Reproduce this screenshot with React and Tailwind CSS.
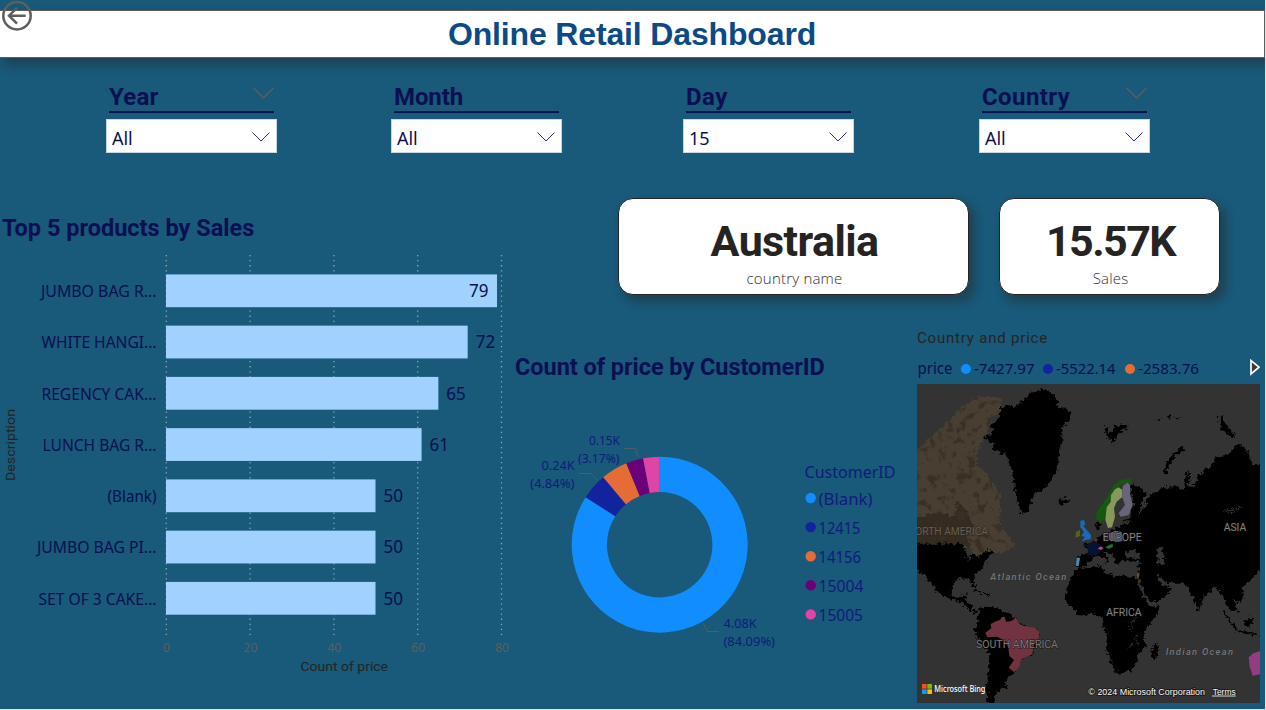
import React from "react";

const slicers = [
  { title: "Year", value: "All", header: true, gap: "ml-[106px]", track: "tracking-[0.2px]" },
  { title: "Month", value: "All", header: false, gap: "ml-[114px]", track: "tracking-[-0.1px]" },
  { title: "Day", value: "15", header: false, gap: "ml-[121px]", track: "tracking-[0.5px]" },
  { title: "Country", value: "All", header: true, gap: "ml-[125px]", track: "tracking-[0.4px]" },
];

const bars = [
  { name: "JUMBO BAG R...", value: 79, left: 41 },
  { name: "WHITE HANGI...", value: 72, left: 41.5 },
  { name: "REGENCY CAK...", value: 65, left: 41.5 },
  { name: "LUNCH BAG R...", value: 61, left: 42.5 },
  { name: "(Blank)", value: 50, left: 107.5 },
  { name: "JUMBO BAG PI...", value: 50, left: 37 },
  { name: "SET OF 3 CAKE...", value: 50, left: 38.5 },
];

const slices = [
  { id: "(Blank)", color: "#118dff", from: 0, to: 302.7, width: 54 },
  { id: "12415", color: "#12239e", from: 302.7, to: 320.1, width: 42 },
  { id: "14156", color: "#e66c37", from: 320.1, to: 337.7, width: 42.5 },
  { id: "15004", color: "#6b007b", from: 337.7, to: 349.1, width: 45 },
  { id: "15005", color: "#e044a7", from: 349.1, to: 360, width: 44.5 },
];

const SEGOE = "font-['Noto_Sans',sans-serif]";
const DIN = "font-['Roboto',sans-serif]";

function Fit({ x, y, w, size, fill, children, className = SEGOE, ...rest }) {
  return (
    <text x={x} y={y} textLength={w} lengthAdjust="spacingAndGlyphs" fontSize={size} fill={fill} className={className} {...rest}>
      {children}
    </text>
  );
}

function ring(from, to, cx, cy, r, q) {
  const p = (a, rad) => {
    const t = ((a - 90) * Math.PI) / 180;
    return `${cx + rad * Math.cos(t)} ${cy + rad * Math.sin(t)}`;
  };
  const big = to - from > 180 ? 1 : 0;
  return `M${p(from, r)}A${r} ${r} 0 ${big} 1 ${p(to, r)}L${p(to, q)}A${q} ${q} 0 ${big} 0 ${p(from, q)}Z`;
}

function Slicer({ title, value, header, gap, track }) {
  return (
    <div className={`w-[171px] ${gap}`}>
      <div className="ml-[3px] flex h-[31px] w-[165px] items-start justify-between border-b-2 border-[#0b1157]">
        <span className={`${DIN} ${track} text-[24px] leading-[30px] font-bold text-[#0a1051]`}>{title}</span>
        {header && (
          <svg width="21" height="12" viewBox="0 0 21 12" className="mt-[5px]" fill="none" stroke="#605e5c" strokeWidth="1.3">
            <path d="M0.5 1L10.5 11L20.5 1" />
          </svg>
        )}
      </div>
      <div className="mt-[6px] flex h-[34px] items-center justify-between border border-[#c9d8e0] bg-white pr-[6px] pl-[5px]">
        <span className={`${SEGOE} pt-[3px] text-[18px] leading-[24px] tracking-[-0.1px] text-[#0a1051]`}>{value}</span>
        <svg width="18" height="10" viewBox="0 0 18 10" className="mt-px" fill="none" stroke="#2a2a78" strokeWidth="1">
          <path d="M0.5 0.5L9 9L17.5 0.5" />
        </svg>
      </div>
    </div>
  );
}

function BarChart() {
  const ink = "#0a1051";
  return (
    <svg width="515" height="430" viewBox="0 250 515 430" className="block">
      {[0, 20, 40, 60, 80].map((t) => (
        <g key={t}>
          <line x1={166.3 + t * 4.19} x2={166.3 + t * 4.19} y1="255" y2="638" stroke="#8ba5ae" strokeWidth="1.3" strokeDasharray="1.3 3.75" />
          <text x={166.5 + t * 4.195} y="652" textAnchor="middle" fontSize="12" fill="#605e5c" className={SEGOE}>{t}</text>
        </g>
      ))}
      {bars.map((b, i) => {
        const y = 274.4 + i * 51.25;
        const w = b.value * 4.19;
        return (
          <g key={i}>
            <rect x="166" y={y} width={w} height="32.8" fill="#a0d1ff" />
            <Fit x={b.left} y={y + 22.6} w={156.5 - b.left} size="15.4" fill={ink}>{b.name}</Fit>
            <Fit x={i === 0 ? 469 : 166 + w + 8} y={y + 22.6} w="19.5" size="17.6" fill={ink}>{b.value}</Fit>
          </g>
        );
      })}
      <Fit x="300.5" y="671" w="87.5" size="13.4" fill="#252423" className={DIN}>Count of price</Fit>
      <Fit x="0" y="0" w="72" size="13.4" fill="#252423" className={DIN} transform="translate(15 481) rotate(-90)">Description</Fit>
    </svg>
  );
}

function Donut() {
  const ink = "#101c7c";
  return (
    <svg width="402" height="260" viewBox="515 410 402 260" className="block">
      {slices.map((s) => (
        <path key={s.id} d={ring(s.from, s.to, 659.7, 544.7, 88, 52.7)} fill={s.color} />
      ))}
      <g fill="none" stroke="#605e5c" strokeWidth="0.8">
        <path d="M624 448.5H635.5L638 457" />
        <path d="M579 473.5H591L597 480" />
        <path d="M703 623L707.500 631.500H719" />
      </g>
      <Fit x="589" y="445" w="31" size="12.4" fill={ink}>0.15K</Fit>
      <Fit x="578" y="463" w="41.500" size="12.4" fill={ink}>(3.17%)</Fit>
      <Fit x="541.500" y="470" w="33" size="12.4" fill={ink}>0.24K</Fit>
      <Fit x="530" y="488" w="44.500" size="12.4" fill={ink}>(4.84%)</Fit>
      <Fit x="723.500" y="628" w="33" size="12.4" fill={ink}>4.08K</Fit>
      <Fit x="723.500" y="646" w="51.500" size="12.4" fill={ink}>(84.09%)</Fit>
      <Fit x="804.500" y="477.500" w="91" size="15.6" fill={ink}>CustomerID</Fit>
      {slices.map((s, i) => (
        <g key={s.id}>
          <circle cx="810.700" cy={498 + i * 29.1} r="5.2" fill={s.color} />
          <Fit x="818.500" y={505 + i * 29.1} w={s.width} size="16" fill={ink}>{s.id}</Fit>
        </g>
      ))}
    </svg>
  );
}

function WorldMap() {
  const sea = "#333333";
  return (
    <svg width="343" height="319" viewBox="51 192 1029 957" className="block">
      <defs>
        <filter id="coast" x="0" y="150" width="1140" height="1050" filterUnits="userSpaceOnUse" colorInterpolationFilters="sRGB">
          <feTurbulence type="fractalNoise" baseFrequency="0.09" numOctaves="3" seed="4" />
          <feDisplacementMap in="SourceGraphic" scale="24" xChannelSelector="R" yChannelSelector="G" />
        </filter>
        <filter id="terrain" x="0" y="150" width="1140" height="1050" filterUnits="userSpaceOnUse" colorInterpolationFilters="sRGB">
          <feTurbulence type="fractalNoise" baseFrequency="0.035" numOctaves="4" seed="9" />
          <feColorMatrix values="0 0 0 0 0.22 0 0 0 0 0.185 0 0 0 0 0.145 6 0 0 0 -3.2" />
          <feComposite in2="SourceGraphic" operator="in" />
        </filter>
        <clipPath id="frame"><rect x="51" y="192" width="1029" height="957" /></clipPath>
      </defs>
      <rect x="51" y="192" width="1029" height="957" fill={sea} />
      <g clipPath="url(#frame)">
        <g filter="url(#coast)">
          <g fill="#000">
            <path d="M300 265L320 256L345 260L370 238L390 218L430 206L460 225L477 245L464 255L520 275L505 300L487 320L487 370L477 400L472 447L445 497L405 522L391 547L382 578L360 572L346 520L341 470L326 420L316 402L276 392L280 372L252 355L278 335L270 318L300 290Z" />
            <path d="M40 670H190L205 700L235 705L265 690L290 680L275 705L255 722L247 745L225 765L220 785L229 805L220 803L207 775L175 777L157 795L155 825L168 838L188 825L205 820L197 842L212 848L216 866L236 872L230 880L205 866L180 846L150 838L118 818L95 790L75 765L40 740Z" />
            <path d="M238 868L255 860L290 862L310 875L345 892L352 910L390 925L418 940L415 965L398 1000L360 1020L342 1060L325 1075L312 1090L325 1100L298 1112L285 1130L280 1160H264L258 1110L266 1060L268 1000L240 970L222 930L232 905Z" />
            <path d="M525 750L560 742L605 737L612 755L650 772L665 765L700 772L712 782L718 805L735 840L752 860L780 855L772 885L745 915L730 945L732 968L740 975L715 1000L712 1025L695 1048L670 1060L645 1060L635 1030L618 985L622 950L608 915L605 890L570 880L540 887L520 868L497 842L500 805L512 775Z" />
            <path d="M773 965L777 985L765 1015L752 1012L757 982Z" />
            <path d="M1090 437L1055 432L1045 400L1015 372L1000 385L985 402L945 415L930 440L895 465L880 500L868 500L867 447L852 480L855 512L830 497L800 500L770 512L745 530L735 560L715 585L735 520L700 490L690 495L700 560L690 590L660 602L655 625L620 640L595 655L575 665L550 672L565 690L565 702L530 708L526 735L545 744L562 732L580 712L602 705L625 730L632 722L610 698L625 692L648 725L655 735L665 720L690 725L716 722L716 770L725 800L740 830L755 850L800 828L818 802L785 795L768 768L777 765L795 785L830 790L860 795L875 820L893 872L905 860L905 835L945 800L960 815L975 840L985 865L1015 875L1000 838L1020 852L1032 825L1025 800L1062 770L1090 730Z" />
            <path d="M612 325L628 322L625 340L640 330L642 318L675 312L680 325L650 342L638 378L632 352L625 360L618 345ZM475 545L490 535L508 536L500 550L485 556ZM955 290L968 285L975 310L990 325L1005 350L990 352L965 325ZM765 300L785 296L782 304ZM800 288L812 282L810 298ZM822 290L838 292L830 300ZM590 605L600 610L598 628L588 625ZM1030 905L1060 888L1058 918L1038 920ZM360 565L385 572L375 577L360 575ZM1020 370L1042 390L1030 410Z" />
            <path d="M796 462Q800 415 852 385" fill="none" stroke="#000" strokeWidth="10" />
            <path d="M970 875L1012 930M1015 933L1045 940L1072 942M220 812L270 825M78 765L115 815" fill="none" stroke="#000" strokeWidth="6" />
            <path d="M695 495L740 520L725 532L705 520Z" />
          </g>
          <path fill="#483e31" d="M40 395L100 345L150 300L165 282L185 262L230 235L270 228L300 235L308 255L295 278L275 292L262 335L237 380L228 430L262 470L302 520L298 600L325 650L345 677L330 690L290 700L270 690L230 710L200 700L190 670H40Z" />
          <path fill="#342c20" d="M40 600L120 575L165 590L170 540L200 575L225 625L200 655L215 695L190 670H40Z" />
          <path fill={sea} d="M190 690L215 684L222 700L208 705L212 725L204 720L200 700ZM672 695L700 690L722 705L715 715L680 712ZM768 685L785 680L790 700L797 735L780 738L772 715ZM640 597L665 548L672 553L658 600L700 602L655 620L640 615Z" />
          <path fill="none" stroke={sea} strokeWidth="3" d="M705 895L692 915L695 935M705 945L715 970M680 985L702 973M990 580L1020 570M970 575L1030 560" />
        </g>
        <path filter="url(#terrain)" fill="#fff" d="M51 395L100 350L150 305L185 267L230 240L300 240L290 275L262 325L235 370L225 425L262 475L298 530L295 600L320 650L330 682L230 700L190 666H51Z" />
        <path fill="#713340" d="M272 912L290 903L300 900L305 892L314 890L318 905L335 903L348 892L355 910L372 918L405 923L419 938L415 957L402 975L397 1003L365 1017L358 1040L343 1057L326 1043L342 1020L328 1008L325 985L318 965L292 950L262 952L256 938L274 925Z" />
        <path fill="#14590f" d="M588 583L600 560L610 550L625 525L640 498L660 480L690 476L697 485L686 492L668 492L655 501L640 515L630 545L620 565L617 595L604 605L590 598Z" />
        <path fill="#87985b" d="M620 562L632 545L633 525L645 508L656 502L667 510L666 532L650 545L642 565L645 590L636 622L624 624L616 600Z" />
        <path fill="#69647a" d="M668 498L682 488L690 495L690 520L698 555L686 585L662 590L656 580L675 555L666 530Z" />
        <path fill="#1b69b8" d="M541 602L552 600L556 612L550 618L562 632L573 645L572 658L560 659L545 664L555 650L544 648L552 636L541 622Z" />
        <path fill="#566016" d="M528 635L540 630L540 648L526 653Z" />
        <path fill="#041533" d="M550 672L565 674L580 662L598 672L601 695L590 706L562 704L564 686Z" />
        <path fill="#6d321c" d="M580 660L594 655L590 667Z" />
        <path fill="#b14b99" d="M593 686L602 679L610 684L604 690Z" />
        <path fill="#187529" d="M616 682L628 675L638 671L639 680L626 687Z" />
        <path fill="#64627c" d="M628 640L645 632L665 636L667 664L648 667L630 658Z" />
        <path fill="#4b4960" d="M610 640L630 640V660L610 662Z" opacity="0.55" />
        <path fill="#458eae" d="M530 712L540 714L536 738L528 738Z" />
        <path fill="#895027" d="M713 758L717 762L715 778L711 770Z" />
        <path fill="#943c83" d="M1046 1012L1060 1000L1082 992V1062L1058 1067L1049 1040Z" />
        <g className={DIN} fill="#808080" stroke="#111" strokeWidth="2.500" paintOrder="stroke">
          <text x="24" y="645" fontSize="33" textLength="240" lengthAdjust="spacingAndGlyphs" fill="#675f55" stroke="#2c251c">NORTH AMERICA</text>
          <text x="608" y="663" fontSize="33" textLength="117" lengthAdjust="spacingAndGlyphs">EUROPE</text>
          <text x="971" y="633" fontSize="33" textLength="68" lengthAdjust="spacingAndGlyphs">ASIA</text>
          <text x="619" y="889" fontSize="33" textLength="106" lengthAdjust="spacingAndGlyphs">AFRICA</text>
          <text x="228" y="984" fontSize="33" textLength="246" lengthAdjust="spacingAndGlyphs" fill="#807779">SOUTH AMERICA</text>
        </g>
        <g className={DIN} fill="#777" fontStyle="italic" fontWeight="500" fontSize="28" stroke="#292929" strokeWidth="2" paintOrder="stroke">
          <text x="271" y="779" textLength="228">Atlantic Ocean</text>
          <text x="797" y="1004" textLength="202">Indian Ocean</text>
        </g>
        <path fill="#f25022" d="M66 1092H80V1106H66Z" />
        <path fill="#7fba00" d="M82 1092H96V1106H82Z" />
        <path fill="#00a4ef" d="M66 1108H80V1122H66Z" />
        <path fill="#ffb900" d="M82 1108H96V1122H82Z" />
        <g className={SEGOE} fill="#fff">
          <text x="103" y="1116" fontSize="26" fontWeight="500" textLength="153" lengthAdjust="spacingAndGlyphs">Microsoft Bing</text>
          <g stroke="#111" strokeWidth="4" paintOrder="stroke" fontSize="25" className="font-['Liberation_Sans',sans-serif]">
            <text x="565" y="1125" textLength="350" lengthAdjust="spacingAndGlyphs">© 2024 Microsoft Corporation</text>
            <text x="938" y="1125" textLength="69" lengthAdjust="spacingAndGlyphs">Terms</text>
          </g>
          <path d="M936 1128H1007" stroke="#fff" strokeWidth="2.500" />
        </g>
      </g>
    </svg>
  );
}

function Card({ value, label, className, valueClass, labelClass }) {
  return (
    <div className={`flex h-[97px] flex-col items-center rounded-[15px] border border-[#252423] bg-white pl-[2px] shadow-[5px_6px_9px_1px_rgba(37,36,35,0.42)] ${className}`}>
      <div className={`${DIN} mt-[16px] h-[53px] text-[43px] leading-[52px] font-bold whitespace-nowrap text-[#252423] ${valueClass}`}>{value}</div>
      <div className={`h-[22px] font-['Open_Sans',sans-serif] text-[15px] leading-[21px] font-light whitespace-nowrap text-[#323130] ${labelClass}`}>{label}</div>
    </div>
  );
}

export default function App() {
  const legend = [
    { color: "bg-[#118dff]", text: "-7427.97", w: 60.5 },
    { color: "bg-[#12239e]", text: "-5522.14", w: 59.5 },
    { color: "bg-[#e66c37]", text: "-2583.76", w: 61 },
  ];
  return (
    <div className="h-[710px] w-[1266px] overflow-hidden border-r border-b border-[#dce6ea] bg-[#195979]">
      <header className="relative pt-[10px]">
        <div className="flex h-[48px] w-[1265px] items-center justify-center border border-l-0 border-[#605e5c] bg-white shadow-[5px_6px_9px_1px_rgba(37,36,35,0.42)]">
          <h1 className="font-['Liberation_Sans',Arial,sans-serif] text-[32px] leading-[40px] font-bold tracking-[-0.15px] whitespace-nowrap text-[#0b4a85]">Online Retail Dashboard</h1>
        </div>
        <svg width="32" height="32" viewBox="0 0 32 32" className="absolute top-0 left-[1px]" fill="none" stroke="#605e5c" strokeWidth="2.500">
          <circle cx="16" cy="15.700" r="13.700" />
          <path d="M24.700 15.700H7.500M16 7.800L8 15.700L16 23.600" />
        </svg>
      </header>

      <section className="mt-[24px] flex">
        {slicers.map((s) => <Slicer key={s.title} {...s} />)}
      </section>

      <main className="flex">
        <section className="w-[515px] pt-[60px]">
          <h2 className={`${DIN} ml-[2px] h-[37px] text-[23.500px] leading-[30px] font-bold whitespace-nowrap text-[#0a1051]`}>Top 5 products by Sales</h2>
          <BarChart />
        </section>
        <div className="w-[750px]">
          <div className="flex pt-[45px] pb-px pl-[103px]">
            <Card value="Australia" label="country name" className="w-[351px]" valueClass="tracking-[-0.6px]" labelClass="tracking-[0.2px]" />
            <Card value="15.57K" label="Sales" className="ml-[30px] w-[221px]" valueClass="tracking-[-1.6px]" labelClass="tracking-[0.2px]" />
          </div>
          <div className="flex">
            <section className="w-[402px] pt-[56px]">
              <h2 className={`${DIN} h-[58px] text-[23.500px] leading-[30px] font-bold tracking-[-0.05px] whitespace-nowrap text-[#0a1051]`}>Count of price by CustomerID</h2>
              <Donut />
            </section>
            <section className="w-[343px] pt-[30px]">
              <h3 className={`${DIN} h-[25px] text-[15px] leading-[24px] tracking-[0.8px] whitespace-nowrap text-[#252423]`}>Country and price</h3>
              <div className="flex h-[33px] items-center pt-[2px]">
                <svg width="36" height="24" className="block"><Fit x="0.500" y="17" w="35" size="15.500" fill="#0a1051">price</Fit></svg>
                {legend.map((l) => (
                  <div key={l.text} className="flex items-center pl-[8px]">
                    <span className={`mr-[3px] h-[10px] w-[10px] rounded-full ${l.color}`} />
                    <svg width="61" height="24" className="block"><Fit x="0" y="17" w={l.w} size="15" fill="#0a1051">{l.text}</Fit></svg>
                  </div>
                ))}
                <svg width="10" height="17" viewBox="0 0 10 17" className="mb-[3px] ml-auto block" fill="#3b3a39" stroke="#fff" strokeWidth="1.700">
                  <path d="M1 1.500V15L9 8.200Z" />
                </svg>
              </div>
              <WorldMap />
            </section>
          </div>
        </div>
      </main>
    </div>
  );
}
